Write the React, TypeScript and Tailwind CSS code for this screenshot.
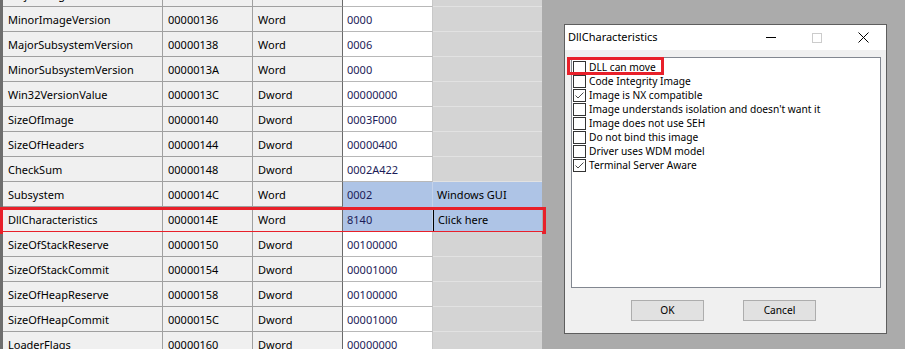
import React from "react"

type Row = { name: string; offset: string; size: string; value: string; meaning?: string; selected?: boolean; focus?: boolean }

const rows: Row[] = [
  { name: "MajorImageVersion", offset: "00000134", size: "Word", value: "0000" },
  { name: "MinorImageVersion", offset: "00000136", size: "Word", value: "0000" },
  { name: "MajorSubsystemVersion", offset: "00000138", size: "Word", value: "0006" },
  { name: "MinorSubsystemVersion", offset: "0000013A", size: "Word", value: "0000" },
  { name: "Win32VersionValue", offset: "0000013C", size: "Dword", value: "00000000" },
  { name: "SizeOfImage", offset: "00000140", size: "Dword", value: "0003F000" },
  { name: "SizeOfHeaders", offset: "00000144", size: "Dword", value: "00000400" },
  { name: "CheckSum", offset: "00000148", size: "Dword", value: "0002A422" },
  { name: "Subsystem", offset: "0000014C", size: "Word", value: "0002", meaning: "Windows GUI", selected: true },
  { name: "DllCharacteristics", offset: "0000014E", size: "Word", value: "8140", meaning: "Click here", selected: true, focus: true },
  { name: "SizeOfStackReserve", offset: "00000150", size: "Dword", value: "00100000" },
  { name: "SizeOfStackCommit", offset: "00000154", size: "Dword", value: "00001000" },
  { name: "SizeOfHeapReserve", offset: "00000158", size: "Dword", value: "00100000" },
  { name: "SizeOfHeapCommit", offset: "0000015C", size: "Dword", value: "00001000" },
  { name: "LoaderFlags", offset: "00000160", size: "Dword", value: "00000000" },
]

const flags = [
  { label: "DLL can move", checked: false },
  { label: "Code Integrity Image", checked: false },
  { label: "Image is NX compatible", checked: true },
  { label: "Image understands isolation and doesn't want it", checked: false },
  { label: "Image does not use SEH", checked: false },
  { label: "Do not bind this image", checked: false },
  { label: "Driver uses WDM model", checked: false },
  { label: "Terminal Server Aware", checked: true },
]

function Checkbox({ checked }: { checked: boolean }) {
  return (
    <div className="w-[13px] h-[13px] border border-[#333333] bg-white flex items-center justify-center shrink-0">
      {checked && (
        <svg width="11" height="11" viewBox="0 0 11 11">
          <polyline points="1.5,5.5 4,8 9.5,2.5" fill="none" stroke="#4a4a4a" strokeWidth="1" />
        </svg>
      )}
    </div>
  )
}

export default function App() {
  return (
    <div
      className="w-[905px] h-[349px] overflow-hidden flex bg-[#ababab] text-black"
      style={{ fontFamily: '"Noto Sans", sans-serif' }}
    >
      {/* field table */}
      <div className="w-[542px] shrink-0 border-l-[3px] border-[#6e6e6e] -mt-[18px] text-[11px]">
        {rows.map((r) => (
          <div key={r.name} className="relative flex h-[25px]">
            <div className="w-[160px] bg-[#f0f0f0] border-r border-b border-[#a0a0a0] pl-[5px] pt-[2px] flex items-center">{r.name}</div>
            <div className="w-[90px] bg-[#f0f0f0] border-r border-b border-[#a0a0a0] pl-[5px] pt-[2px] flex items-center">{r.offset}</div>
            <div className="w-[90px] bg-[#f0f0f0] border-r border-b border-[#6a6a6a] border-b-[#a0a0a0] pl-[5px] pt-[2px] flex items-center">{r.size}</div>
            <div
              className={`w-[90px] border-r border-b pl-[4px] pt-[2px] flex items-center text-[#1c1c58] ${
                r.selected ? "bg-[#aec4e6] border-r-[#c4d2ea] border-b-[#aec4e6]" : "bg-white border-r-[#c8c8c8] border-b-[#b8b8b8]"
              }`}
            >
              {r.value}
            </div>
            <div
              className={`w-[109px] border-b pl-[4px] pt-[2px] flex items-center ${
                r.selected ? "bg-[#aec4e6] border-b-[#aec4e6]" : "bg-[#d4d4d4] border-b-[#e2e2e2]"
              } ${r.focus ? "border-l border-l-black" : ""}`}
            >
              {r.meaning}
            </div>
            {r.focus && (
              <div className="absolute -left-[3px] top-0 w-[546px] h-[27px] border-[3px] border-[#e8202a] pointer-events-none" />
            )}
          </div>
        ))}
      </div>

      {/* dialog area */}
      <div className="flex-1 pl-[22px] pt-[24px]">
        <div className="w-[323px] h-[310px] border border-[#5e5e5e] bg-[#f0f0f0] flex flex-col">
          <div className="h-[25px] bg-white flex items-center">
            <span className="pl-[3px] text-[11px]">DllCharacteristics</span>
            <div className="ml-auto flex h-full">
              <div className="w-[46px] flex items-center justify-center">
                <div className="w-[10px] h-px bg-black" />
              </div>
              <div className="w-[46px] flex items-center justify-center">
                <div className="w-[10px] h-[10px] border border-[#cccccc]" />
              </div>
              <div className="w-[46px] flex items-center justify-center">
                <svg width="11" height="11" viewBox="0 0 11 11">
                  <path d="M0.5 0.5 L10.5 10.5 M10.5 0.5 L0.5 10.5" stroke="#000" strokeWidth="1" />
                </svg>
              </div>
            </div>
          </div>

          <div className="pt-[7px] pl-[6px]">
            <div className="relative w-[310px] h-[231px] bg-white border border-[#828790] pt-[2px] pl-px">
              {flags.map((f) => (
                <div key={f.label} className="h-[14px] flex items-center gap-[3px] text-[10.2px] leading-none">
                  <Checkbox checked={f.checked} />
                  <span>{f.label}</span>
                </div>
              ))}
              <div className="absolute -left-[5px] -top-[1px] w-[97px] h-[18px] border-[3px] border-[#e8202a] pointer-events-none" />
            </div>
          </div>

          <div className="mt-[12px] ml-[66px] flex gap-[39px] text-[10.2px]">
            <button className="w-[73px] h-[21px] bg-[#e1e1e1] border border-[#adadad] flex items-center justify-center">OK</button>
            <button className="w-[73px] h-[21px] bg-[#e1e1e1] border border-[#adadad] flex items-center justify-center">Cancel</button>
          </div>
        </div>
      </div>
    </div>
  )
}
